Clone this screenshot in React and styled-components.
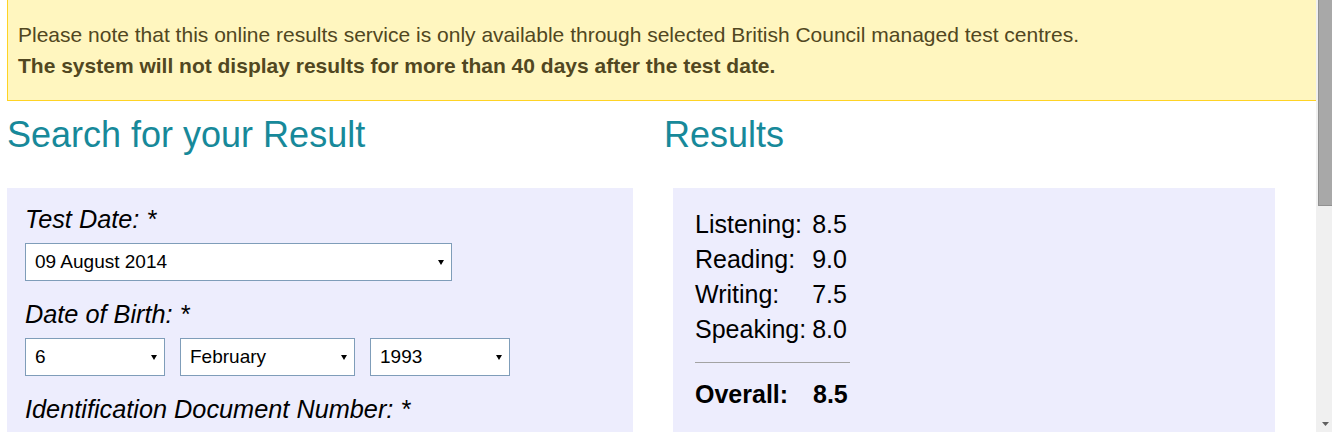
import React from "react";
import styled, { createGlobalStyle } from "styled-components";

const GlobalStyle = createGlobalStyle`
  html, body {
    margin: 0;
    padding: 0;
    background: #ffffff;
    font-family: "Liberation Sans", Arial, sans-serif;
    color: #000;
  }
`;

const Page = styled.div`
  display: flex;
  width: 1332px;
  height: 432px;
  overflow: hidden;
`;

const Main = styled.div`
  flex: 1;
  display: flex;
  flex-direction: column;
  min-width: 0;
`;

const Notice = styled.div`
  margin-left: 7px;
  padding: 19px 10px 19px 10px;
  background: #fff6bf;
  border-left: 1px solid #ffd324;
  border-bottom: 1px solid #ffd324;
  color: #514721;
  font-size: 21px;
`;

const NoticeLine = styled.p`
  margin: 0;
  line-height: 31px;
  font-weight: ${(props) => (props.strong ? 700 : 400)};
`;

const Columns = styled.div`
  display: flex;
  gap: 31px;
  padding-left: 7px;
  margin-top: 13px;
`;

const Column = styled.div`
  display: flex;
  flex-direction: column;
  width: ${(props) => props.width};
`;

const Heading = styled.h2`
  margin: 0 0 32px 0;
  font-size: 36px;
  font-weight: 400;
  line-height: 42px;
  color: #17899a;
`;

const Panel = styled.div`
  background: #ededfd;
  margin-left: ${(props) => props.offset || "0"};
  padding: ${(props) => props.pad};
  flex: 1;
`;

const Field = styled.div`
  display: flex;
  flex-direction: column;
  margin-bottom: 18px;
`;

const Label = styled.label`
  font-size: 25.3px;
  font-style: italic;
  line-height: 30px;
  margin-bottom: 9px;
`;

const SelectRow = styled.div`
  display: flex;
  gap: 15px;
`;

const SelectBox = styled.div`
  display: flex;
  align-items: center;
  justify-content: space-between;
  box-sizing: border-box;
  width: ${(props) => props.width};
  height: 38px;
  padding: 0 7px 0 9px;
  background: #ffffff;
  border: 1px solid #7f9db9;
  font-size: 19px;
`;

const Arrow = () => (
  <svg width="6" height="5" viewBox="0 0 6 5">
    <polygon points="0,0 6,0 3,5" fill="#000" />
  </svg>
);

const Select = ({ value, width }) => (
  <SelectBox width={width}>
    <span>{value}</span>
    <Arrow />
  </SelectBox>
);

const ScoreGrid = styled.div`
  display: grid;
  grid-template-columns: auto auto;
  column-gap: 6px;
  width: max-content;
  font-size: 25px;
  line-height: 35px;
`;

const Divider = styled.hr`
  width: 155px;
  margin: 15px 0 14px 0;
  border: 0;
  border-top: 1px solid #a3a3a3;
  height: 0;
`;

const OverallGrid = styled(ScoreGrid)`
  font-weight: 700;
  grid-template-columns: 118px auto;
  column-gap: 0;
`;

const Scrollbar = styled.div`
  width: 16px;
  display: flex;
  flex-direction: column;
  background: #f0f0f0;
`;

const Thumb = styled.div`
  margin-left: 2px;
  height: 205px;
  background: #a8a8a8;
  border-left: 1px solid #919191;
  border-bottom: 1px solid #919191;
`;

const DownArrow = styled.div`
  margin-top: auto;
  height: 16px;
  display: flex;
  align-items: center;
  justify-content: center;
  padding-left: 3px;
`;

const scores = [
  ["Listening:", "8.5"],
  ["Reading:", "9.0"],
  ["Writing:", "7.5"],
  ["Speaking:", "8.0"],
];

export default function App() {
  return (
    <>
      <GlobalStyle />
      <Page>
        <Main>
          <Notice>
            <NoticeLine>
              Please note that this online results service is only available through
              selected British Council managed test centres.
            </NoticeLine>
            <NoticeLine strong>
              The system will not display results for more than 40 days after the test date.
            </NoticeLine>
          </Notice>
          <Columns>
            <Column width="626px">
              <Heading>Search for your Result</Heading>
              <Panel pad="16px 18px 0 18px">
                <Field>
                  <Label>Test Date: *</Label>
                  <Select value="09 August 2014" width="427px" />
                </Field>
                <Field>
                  <Label>Date of Birth: *</Label>
                  <SelectRow>
                    <Select value="6" width="140px" />
                    <Select value="February" width="175px" />
                    <Select value="1993" width="140px" />
                  </SelectRow>
                </Field>
                <Field>
                  <Label>Identification Document Number: *</Label>
                </Field>
              </Panel>
            </Column>
            <Column width="611px">
              <Heading>Results</Heading>
              <Panel offset="9px" pad="19px 22px 0 22px">
                <ScoreGrid>
                  {scores.map(([name, score]) => (
                    <React.Fragment key={name}>
                      <span>{name}</span>
                      <span>{score}</span>
                    </React.Fragment>
                  ))}
                </ScoreGrid>
                <Divider />
                <OverallGrid>
                  <span>Overall:</span>
                  <span>8.5</span>
                </OverallGrid>
              </Panel>
            </Column>
          </Columns>
        </Main>
        <Scrollbar>
          <Thumb />
          <DownArrow>
            <svg width="7" height="4" viewBox="0 0 7 4">
              <polygon points="0,0 7,0 3.5,4" fill="#606060" />
            </svg>
          </DownArrow>
        </Scrollbar>
      </Page>
    </>
  );
}
